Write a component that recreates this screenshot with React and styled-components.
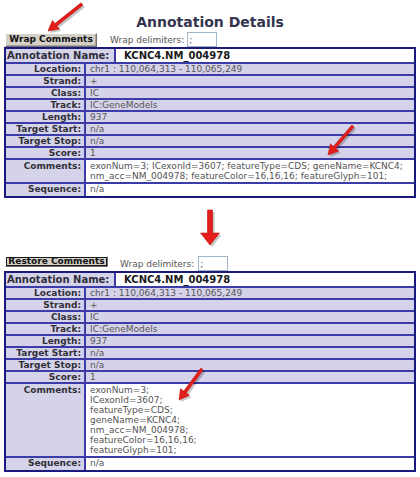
import React from "react"
import styled, { createGlobalStyle } from "styled-components"

const GlobalStyle = createGlobalStyle`
  html, body {
    margin: 0;
    padding: 0;
    background: #ffffff;
  }
  body {
    font-family: "DejaVu Sans", Verdana, sans-serif;
  }
`

const Page = styled.div`
  position: relative;
  width: 420px;
  padding: 0 4px;
  box-sizing: border-box;
`

const Title = styled.h1`
  margin: 0 0 1px;
  padding-top: 13px;
  height: 18px;
  font-size: 14px;
  line-height: 18px;
  font-weight: bold;
  text-align: center;
  color: #34344f;
`

const Toolbar = styled.div`
  display: flex;
  align-items: center;
  height: 15px;
  padding-left: 1px;
`

const Button = styled.button`
  box-sizing: border-box;
  width: ${p => p.$width}px;
  height: ${p => p.$height}px;
  margin: 0;
  padding: 0;
  font-family: "DejaVu Sans", Verdana, sans-serif;
  font-size: 9px;
  font-weight: bold;
  line-height: 1;
  color: #111;
  background: #d4d0c8;
  border: 1px solid;
  border-color: #ffffff #707070 #707070 #ffffff;
  box-shadow: ${p => (p.$pressed ? "inset 0 0 0 1px #1a1a1a" : "inset -1px -1px 0 #a8a49c")};
  align-self: ${p => (p.$pressed ? "flex-start" : "center")};
  white-space: nowrap;
`

const DelimLabel = styled.span`
  margin-left: ${p => p.$gap}px;
  font-size: 9px;
  color: #555;
  white-space: nowrap;
`

const DelimInput = styled.input`
  box-sizing: border-box;
  width: 30px;
  height: 15px;
  margin: 0 0 0 ${p => p.$gap}px;
  padding: 0 1px;
  border: 1px solid #a2b4c8;
  font-family: "DejaVu Sans", Verdana, sans-serif;
  font-size: 9px;
  color: #555;
  background: #fff;
  outline: none;
`

const Panel = styled.div`
  display: flex;
  flex-direction: column;
  gap: 2px;
  border: 2px solid #1a1a7c;
  background: #3c3ca8;
`

const HeaderRow = styled.div`
  display: grid;
  grid-template-columns: 108px 1fr;
  column-gap: 2px;
  height: 13px;
`

const HeaderLabel = styled.div`
  background: #d5d3e9;
  padding-left: 1px;
  font-size: 10px;
  line-height: 13px;
  font-weight: bold;
  color: #2e2e3a;
  white-space: nowrap;
`

const HeaderValue = styled.div`
  background: #ffffff;
  padding-left: 8px;
  font-size: 10px;
  line-height: 13px;
  font-weight: bold;
  color: #1a1a1a;
`

const Row = styled.div`
  display: grid;
  grid-template-columns: 78px 1fr;
  column-gap: 2px;
  min-height: ${p => p.$height || 10}px;
`

const Label = styled.div`
  background: #d5d3e9;
  padding-right: 3px;
  text-align: right;
  font-size: 9px;
  line-height: 10px;
  padding-top: ${p => (p.$top ? 1 : 0)}px;
  font-weight: bold;
  color: #303038;
  white-space: nowrap;
`

const Value = styled.div`
  background: ${p => (p.$white ? "#ffffff" : "#d5d3e9")};
  padding: ${p => (p.$multi ? "1px 4px" : "0 4px")};
  font-size: 9px;
  line-height: 10px;
  color: #555;
  white-space: ${p => (p.$multi ? "normal" : "nowrap")};
`

const CommentLine = styled.div`
  white-space: nowrap;
`

const Divider = styled.div`
  display: flex;
  justify-content: center;
  height: 58px;
  padding-left: 4px;
`

const OverlaySvg = styled.svg`
  position: absolute;
  left: ${p => p.$left}px;
  top: ${p => p.$top}px;
  overflow: visible;
  pointer-events: none;
`

function arrowPoints(x1, y1, x2, y2, shaft, head, headLen) {
  const dx = x2 - x1
  const dy = y2 - y1
  const len = Math.hypot(dx, dy)
  const ux = dx / len
  const uy = dy / len
  const nx = -uy
  const ny = ux
  const bx = x2 - ux * headLen
  const by = y2 - uy * headLen
  const pts = [
    [x1 + (nx * shaft) / 2, y1 + (ny * shaft) / 2],
    [bx + (nx * shaft) / 2, by + (ny * shaft) / 2],
    [bx + (nx * head) / 2, by + (ny * head) / 2],
    [x2, y2],
    [bx - (nx * head) / 2, by - (ny * head) / 2],
    [bx - (nx * shaft) / 2, by - (ny * shaft) / 2],
    [x1 - (nx * shaft) / 2, y1 - (ny * shaft) / 2],
  ]
  return pts.map(p => p[0].toFixed(1) + "," + p[1].toFixed(1)).join(" ")
}

function ArrowShape({ x1, y1, x2, y2, shaft = 3, head = 10, headLen = 9 }) {
  const pts = arrowPoints(x1, y1, x2, y2, shaft, head, headLen)
  return (
    <g>
      <polygon points={pts} transform="translate(2,2)" fill="#000" opacity="0.22" />
      <polygon points={pts} fill="#e41e1a" stroke="#b8100c" strokeWidth="0.6" strokeLinejoin="round" />
    </g>
  )
}

// overlay arrow, coordinates given in page space
function PointerArrow({ x1, y1, x2, y2, shaft, head, headLen }) {
  const left = Math.min(x1, x2) - 12
  const top = Math.min(y1, y2) - 12
  const w = Math.abs(x2 - x1) + 24
  const h = Math.abs(y2 - y1) + 24
  return (
    <OverlaySvg $left={left} $top={top} width={w} height={h} viewBox={`0 0 ${w} ${h}`}>
      <ArrowShape
        x1={x1 - left}
        y1={y1 - top}
        x2={x2 - left}
        y2={y2 - top}
        shaft={shaft}
        head={head}
        headLen={headLen}
      />
    </OverlaySvg>
  )
}

const fields = [
  ["Location:", "chr1 : 110,064,313 - 110,065,249"],
  ["Strand:", "+"],
  ["Class:", "IC"],
  ["Track:", "IC:GeneModels"],
  ["Length:", "937"],
  ["Target Start:", "n/a"],
  ["Target Stop:", "n/a"],
  ["Score:", "1"],
]

const commentParts = [
  "exonNum=3;",
  "ICexonId=3607;",
  "featureType=CDS;",
  "geneName=KCNC4;",
  "nm_acc=NM_004978;",
  "featureColor=16,16,16;",
  "featureGlyph=101;",
]

function AnnotationTable({ wrapped }) {
  return (
    <Panel>
      <HeaderRow>
        <HeaderLabel>Annotation Name:</HeaderLabel>
        <HeaderValue>KCNC4.NM_004978</HeaderValue>
      </HeaderRow>
      {fields.map(([label, value]) => (
        <Row key={label}>
          <Label>{label}</Label>
          <Value>{value}</Value>
        </Row>
      ))}
      <Row>
        <Label $top>Comments:</Label>
        <Value $white $multi>
          {wrapped ? (
            commentParts.map(part => <CommentLine key={part}>{part}</CommentLine>)
          ) : (
            <>
              <CommentLine>exonNum=3; ICexonId=3607; featureType=CDS; geneName=KCNC4;</CommentLine>
              <CommentLine>nm_acc=NM_004978; featureColor=16,16,16; featureGlyph=101;</CommentLine>
            </>
          )}
        </Value>
      </Row>
      <Row $height={12}>
        <Label>Sequence:</Label>
        <Value $white>n/a</Value>
      </Row>
    </Panel>
  )
}

export default function App() {
  return (
    <Page>
      <GlobalStyle />
      <Title>Annotation Details</Title>
      <Toolbar>
        <Button $width={92} $height={14}>Wrap Comments</Button>
        <DelimLabel $gap={13}>Wrap delimiters:</DelimLabel>
        <DelimInput $gap={3} defaultValue=";" />
      </Toolbar>
      <AnnotationTable wrapped={false} />
      <Divider>
        <svg width="30" height="58" viewBox="0 0 30 58">
          <ArrowShape x1={13} y1={12} x2={13} y2={47} shaft={5} head={19} headLen={12} />
        </svg>
      </Divider>
      <Toolbar>
        <Button $width={103} $height={11} $pressed>Restore Comments</Button>
        <DelimLabel $gap={12}>Wrap delimiters:</DelimLabel>
        <DelimInput $gap={4} defaultValue=";" />
      </Toolbar>
      <AnnotationTable wrapped />
      <PointerArrow x1={82} y1={4} x2={48} y2={31} shaft={3} head={11} headLen={10} />
      <PointerArrow x1={353} y1={126} x2={328} y2={155} shaft={3} head={11} headLen={10} />
      <PointerArrow x1={202} y1={369} x2={179} y2={400} shaft={3} head={11} headLen={10} />
    </Page>
  )
}
